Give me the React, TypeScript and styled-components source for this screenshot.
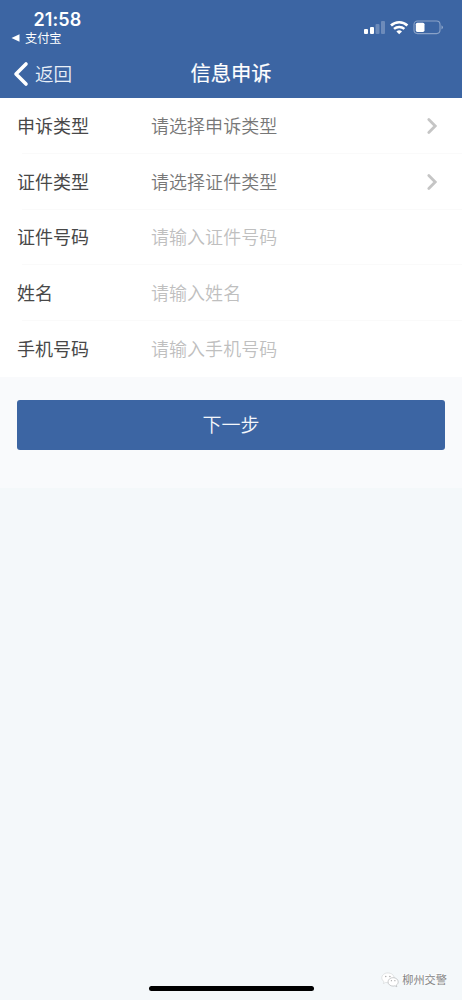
import React from "react";
import styled, { createGlobalStyle } from "styled-components";

const GlobalStyle = createGlobalStyle`
  * { box-sizing: border-box; }
  body {
    margin: 0;
    background: #f4f8fa;
    font-family: "Noto Sans CJK SC", sans-serif;
  }
`;

const Screen = styled.div`
  width: 462px;
  height: 1000px;
  display: flex;
  flex-direction: column;
  overflow: hidden;
  background: #f4f8fa;
`;

const Header = styled.header`
  height: 98px;
  flex: none;
  background: #3c65a3;
  color: #fff;
`;

const StatusBar = styled.div`
  height: 49px;
  display: flex;
  justify-content: space-between;
  padding: 9px 19px 0 11px;
`;

const StatusLeft = styled.div`
  display: flex;
  flex-direction: column;
`;

const Clock = styled.div`
  padding-left: 22.5px;
  font: 600 18px/21px Inter, sans-serif;
  letter-spacing: 0.1px;
`;

const ReturnApp = styled.div`
  display: flex;
  align-items: center;
  gap: 5px;
  height: 16px;
  font-size: 12.2px;
  line-height: 16px;
`;

const StatusIcons = styled.svg`
  margin-top: 10px;
  width: 80px;
  height: 18px;
`;

const NavBar = styled.nav`
  height: 49px;
  display: grid;
  grid-template-columns: 1fr auto 1fr;
  align-items: center;
  padding: 0 13px 2px;
`;

const Back = styled.button`
  display: flex;
  align-items: center;
  gap: 6px;
  padding: 0;
  border: 0;
  background: none;
  color: #e9eff7;
  font: 350 18.6px/26px "Noto Sans CJK SC", sans-serif;

  svg {
    margin-top: 2px;
  }
`;

const Title = styled.h1`
  margin: 0;
  padding-bottom: 2px;
  font-size: 20.3px;
  font-weight: 400;
  line-height: 28px;
  -webkit-text-stroke: 0.2px #fff;
`;

const Form = styled.main`
  flex: none;
  background: #fff;
  height: 279.3px;
`;

const Row = styled.label`
  position: relative;
  display: flex;
  align-items: center;
  height: 55.8px;
  padding: 0 24px 0 17px;
  font-size: 18px;
  line-height: 26px;

  &:not(:last-child)::after {
    content: "";
    position: absolute;
    left: 22px;
    right: 0;
    bottom: 0;
    height: 1px;
    background: #fafafa;
  }
`;

const Label = styled.span`
  width: 134px;
  padding-bottom: 2px;
  color: #484848;
`;

const Value = styled.span<{ $select?: boolean }>`
  flex: 1;
  padding-bottom: 2px;
  font-weight: 350;
  letter-spacing: 0.04px;
  color: ${(p) => (p.$select ? "#777" : "#bfbfbf")};
`;

const Actions = styled.section`
  flex: none;
  height: 111px;
  padding: 22.3px 17px 0;
  background: #f9fafc;
`;

const Submit = styled.button`
  display: block;
  width: 100%;
  height: 50.3px;
  padding: 0 0 2px;
  border: 0;
  border-radius: 3px;
  background: #3c65a3;
  color: #f4f7fb;
  font: 350 19px/28px "Noto Sans CJK SC", sans-serif;
`;

const Footer = styled.footer`
  margin-top: auto;
  height: 34px;
  display: grid;
  grid-template-columns: 1fr 165px 1fr;
`;

const HomeIndicator = styled.div`
  grid-column: 2;
  align-self: end;
  height: 5.5px;
  margin-bottom: 9px;
  border-radius: 3px;
  background: #000;
`;

const Watermark = styled.div`
  display: flex;
  justify-content: flex-end;
  gap: 3px;
  height: 26px;
  align-items: center;
  padding-right: 15px;
  color: #858585;
  font-size: 11.2px;
  line-height: 16px;
  white-space: nowrap;
  text-shadow: -1px -1px 0 #fff;

  svg {
    margin-top: 2px;
  }
`;

const fields = [
  { label: "申诉类型", value: "请选择申诉类型", select: true },
  { label: "证件类型", value: "请选择证件类型", select: true },
  { label: "证件号码", value: "请输入证件号码", select: false },
  { label: "姓名", value: "请输入姓名", select: false },
  { label: "手机号码", value: "请输入手机号码", select: false },
];

export default function App() {
  return (
    <Screen>
      <GlobalStyle />
      <Header>
        <StatusBar>
          <StatusLeft>
            <Clock>21:58</Clock>
            <ReturnApp>
              <svg width="9" height="8" viewBox="0 0 9 8">
                <path d="M0.5 4 8.5 0.3V7.7Z" fill="#fff" />
              </svg>
              支付宝
            </ReturnApp>
          </StatusLeft>
          <StatusIcons viewBox="0 0 80 18" fill="none">
            <rect x="1" y="10" width="4" height="5" rx="1" fill="#fff" />
            <rect x="7" y="8" width="4" height="7" rx="1" fill="#fff" />
            <rect x="12.5" y="5" width="4" height="10" rx="1" fill="#fff" opacity=".25" />
            <rect x="18" y="2" width="4" height="13" rx="1" fill="#fff" opacity=".25" />
            <path d="M28 6.4a12.2 12.2 0 0 1 16.4 0" stroke="#fff" strokeWidth="2.7" />
            <path d="M31 9.9a8 8 0 0 1 10.4 0" stroke="#fff" strokeWidth="2.5" />
            <path d="M33.4 12.4a4.3 4.3 0 0 1 5.6 0L36.2 15.2Z" fill="#fff" />
            <rect x="51" y="2" width="26" height="12.6" rx="3.5" stroke="#fff" strokeOpacity=".4" strokeWidth="1.1" />
            <rect x="52.8" y="3.7" width="8.7" height="9.2" rx="1.6" fill="#fff" />
            <path d="M78.5 6.2q1.4.8 1.4 2.1t-1.4 2.1Z" fill="#fff" opacity=".45" />
          </StatusIcons>
        </StatusBar>
        <NavBar>
          <Back>
            <svg width="16" height="26" viewBox="0 0 16 26" fill="none">
              <path d="M13 3 3 13 13 23" stroke="#fff" strokeWidth="3.6" strokeLinecap="round" strokeLinejoin="round" />
            </svg>
            返回
          </Back>
          <Title>信息申诉</Title>
        </NavBar>
      </Header>
      <Form>
        {fields.map((f) => (
          <Row key={f.label}>
            <Label>{f.label}</Label>
            <Value $select={f.select}>{f.value}</Value>
            {f.select && (
              <svg width="12" height="18" viewBox="0 0 12 18" fill="none">
                <path d="M2.8 2.6 9.2 9 2.8 15.4" stroke="#c5c5c5" strokeWidth="2.8" strokeLinecap="round" />
              </svg>
            )}
          </Row>
        ))}
      </Form>
      <Actions>
        <Submit>下一步</Submit>
      </Actions>
      <Footer>
        <HomeIndicator />
        <Watermark>
          <svg width="18" height="16" viewBox="0 0 19 17">
            <path d="M7.3 1C3.7 1 .8 3.2.8 6.2c0 1.7.9 3.1 2.3 4.1l-.6 2 2.3-1.2c.8.2 1.6.3 2.5.3 3.6 0 6.5-2.3 6.5-5.2S10.9 1 7.3 1Z" fill="#fff" stroke="#d4d7d8" strokeWidth=".7" />
            <path d="M12.8 6c-3 0-5.4 2-5.4 4.5s2.4 4.5 5.4 4.5c.7 0 1.4-.1 2-.3l2 1-.6-1.7c1.2-.8 2-2 2-3.5C18.2 8 15.8 6 12.8 6Z" fill="#fff" stroke="#b0b3b4" strokeWidth=".7" />
            <g fill="#aaa">
              <circle cx="5" cy="4.8" r=".8" />
              <circle cx="9.4" cy="4.8" r=".8" />
              <circle cx="11" cy="9.2" r=".7" />
              <circle cx="14.7" cy="9.2" r=".7" />
            </g>
          </svg>
          柳州交警
        </Watermark>
      </Footer>
    </Screen>
  );
}
